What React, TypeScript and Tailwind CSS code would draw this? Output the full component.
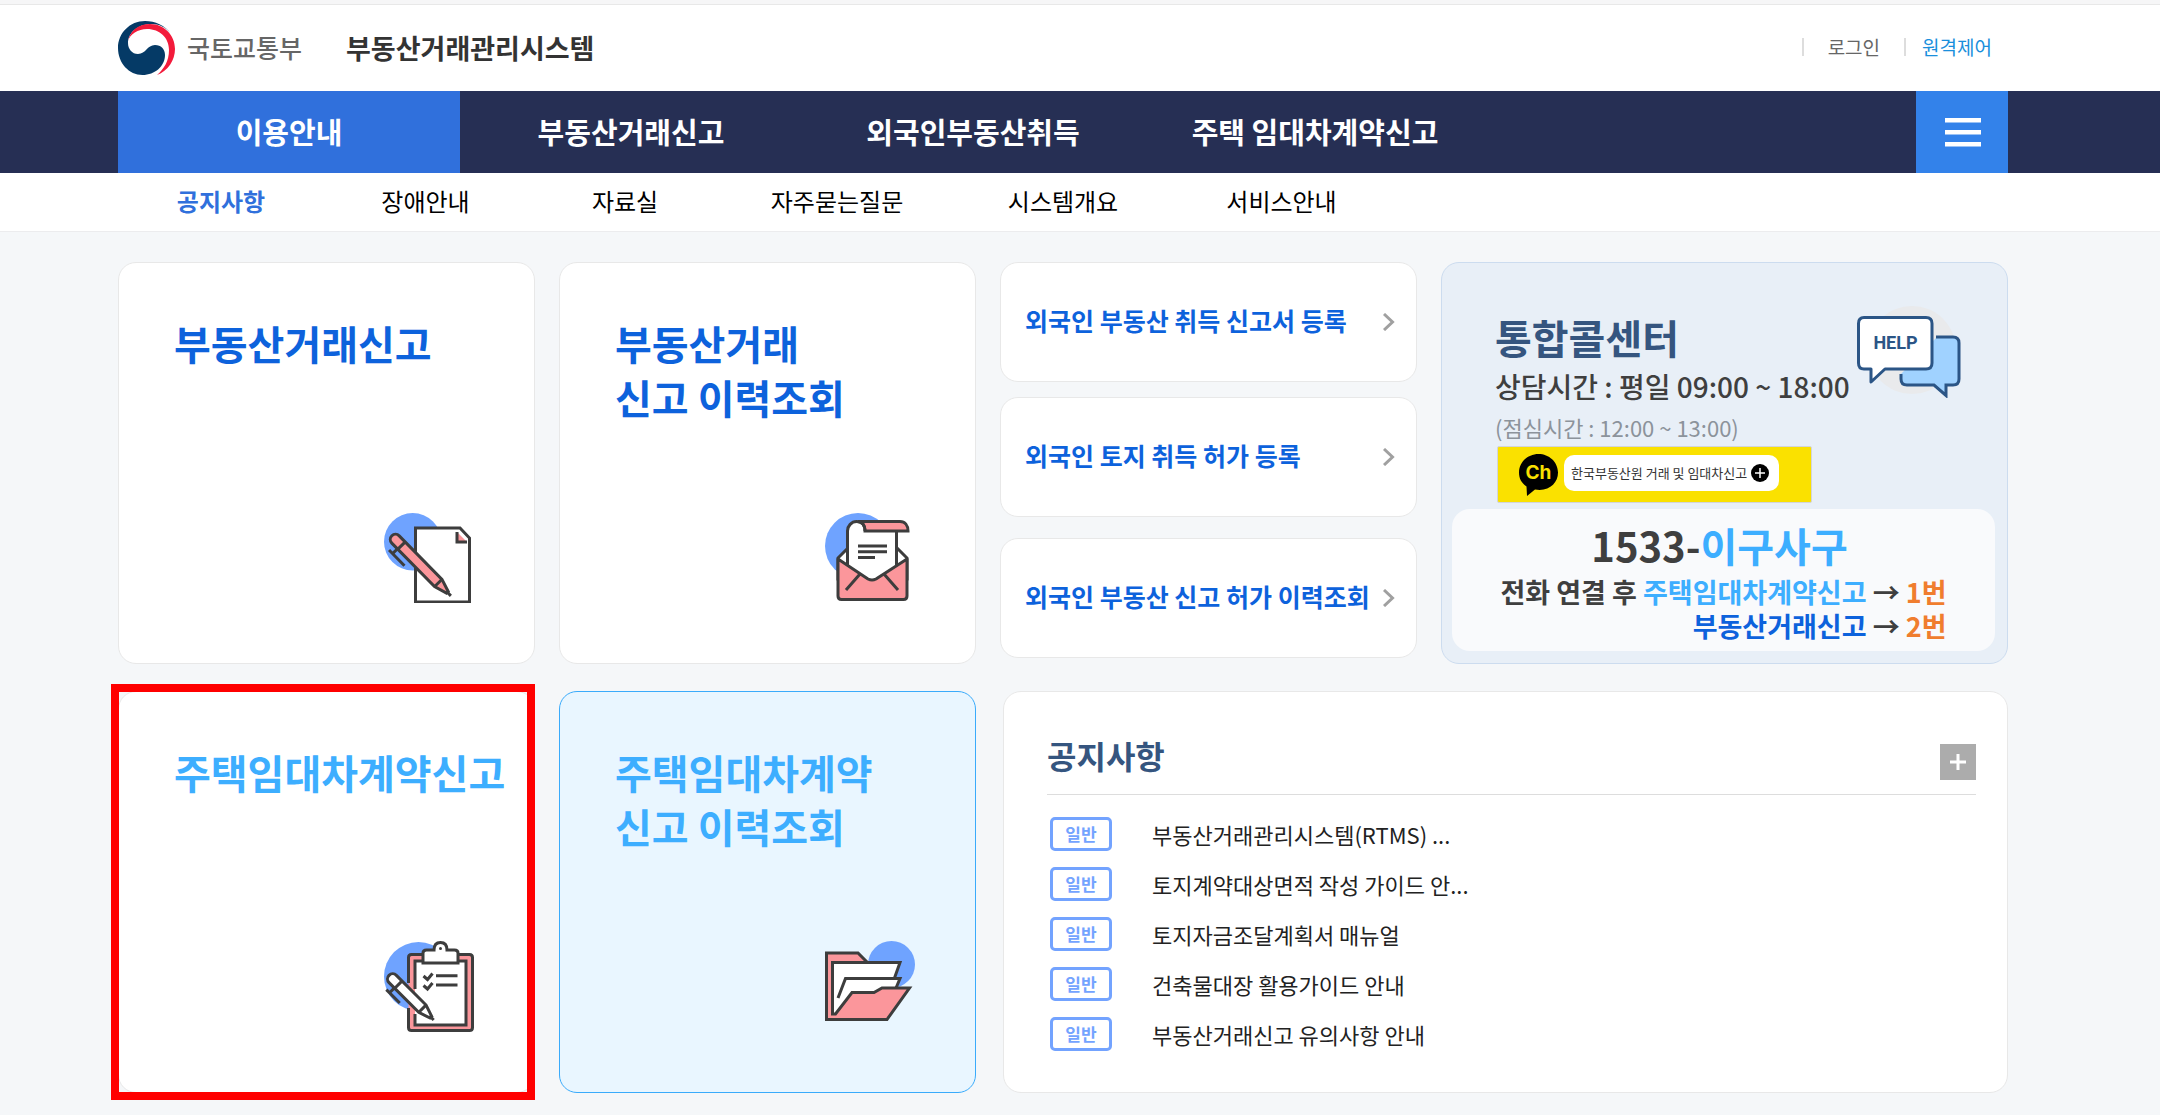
import { ReactNode } from 'react';
import clsx from 'clsx';

const MainMenu = [
    { path: '#guide', name: '이용안내', active: true },
    { path: '#trade', name: '부동산거래신고' },
    { path: '#foreigner', name: '외국인부동산취득' },
    { path: '#lease', name: '주택 임대차계약신고' },
];

const SubMenu = [
    { path: '#notice', name: '공지사항', active: true },
    { path: '#trouble', name: '장애안내' },
    { path: '#data', name: '자료실' },
    { path: '#faq', name: '자주묻는질문' },
    { path: '#system', name: '시스템개요' },
    { path: '#service', name: '서비스안내' },
];

const Notices = [
    '부동산거래관리시스템(RTMS) ...',
    '토지계약대상면적 작성 가이드 안...',
    '토지자금조달계획서 매뉴얼',
    '건축물대장 활용가이드 안내',
    '부동산거래신고 유의사항 안내',
];

const Emblem = () => (
    <svg width="57" height="54" viewBox="0 0 57 54" aria-hidden="true">
        <path
            fill="#053a66"
            d="M53 13C47 4 37 0 27 0 12 0 0 12 0 27c0 15 11 27 24.5 27C37 54 47 45 47 34c0-6-4-10-10-10-8 0-9 9-17 9-6 0-10-5-10-11C10 12 20 3 33 3c8 0 15 3 20 10Z"
        />
        <path
            fill="#f31b3b"
            d="M10 20C12 10 20 3 32 3c14 0 25 11 25 25 0 11-7 22-18 26 7-6 12-14 12-25C51 17 42 8 29 8c-9 0-17 5-19 12Z"
        />
    </svg>
);

const PenPaperIcon = () => (
    <svg width="90" height="90" viewBox="0 0 90 90" fill="none" stroke="#3d3d3d" strokeWidth="3" aria-hidden="true">
        <circle cx="28.7" cy="28.7" r="28.7" fill="#6fa3ff" stroke="none" />
        <path d="M31.5 15H76l9.5 10v64h-54Z" fill="#fff" />
        <path d="M73 19v10h10Z" fill="#fb969b" stroke="none" />
        <path d="M73 19v10h10" />
        <g transform="translate(11.5 26.5) rotate(45.5)">
            <path d="M0-5.2h61l13 4v2.4l-13 4H0A5.2 5.2 0 0 1 0-5.2Z" fill="#fb969b" />
            <path d="M8.5-5v10M61-5v10M73 0h6M8 5v7M3 12h22" />
        </g>
    </svg>
);

const EnvelopeIcon = () => (
    <svg width="90" height="90" viewBox="0 0 90 90" fill="none" stroke="#3d3d3d" strokeWidth="3" aria-hidden="true">
        <circle cx="33" cy="33" r="33" fill="#6fa3ff" stroke="none" />
        <path d="M13 45 24 34h47l11 11v21H13Z" fill="#fff" />
        <path d="M22.5 55V18c0-5 4-9.5 9-9.5h44v9.5h-4v37L47 68Z" fill="#fff" stroke="none" />
        <path d="M33 8.5h42c5 0 8 4 8 9.5H40c0-5-2-9-7-9.5Z" fill="#fb969b" />
        <path d="M22.5 53V18c0-5 4-9.5 9-9.5S40 12 40 18M71.5 18v34" />
        <path
            d="M13 46l30 20c3 1.5 5 1.5 8 0l31-20v37c0 2-1 3.5-3.5 3.5h-62C14 86.5 13 85 13 83Z"
            fill="#fb969b"
            strokeLinejoin="round"
        />
        <path d="M35 61 21 77M59 61l14 16" />
        <path d="M33 33h29M33 38.7h29M33 44.5h17" />
    </svg>
);

const ClipboardIcon = () => (
    <svg width="90" height="91" viewBox="0 0 90 91" fill="none" stroke="#3d3d3d" strokeWidth="3" aria-hidden="true">
        <circle cx="34.5" cy="35.5" r="34.5" fill="#6fa3ff" stroke="none" />
        <rect x="24.5" y="13.5" width="64" height="76" rx="3" fill="#fb969b" stroke="none" />
        <rect x="31" y="20" width="51" height="64" fill="#fff" stroke="none" />
        <path d="M24.5 42V16.5c0-2 1-3 3-3h58c2 0 3 1 3 3v70c0 2-1 3-3 3h-58c-2 0-3-1-3-3V67" />
        <path d="M31 48V20h51v64H31V73" />
        <path d="M39 22V12c0-2 1-3 3.5-3H50c0-5 2-7.5 6.5-7.5S63 4 63 9h7.5c2.5 0 3.5 1 3.5 3v10Z" fill="#fff" />
        <circle cx="56.5" cy="7.5" r="1.5" fill="#3d3d3d" stroke="none" />
        <path d="m39.5 35 4 3.5 5-6M39.5 44.5l4 3.5 5-6M52 34.7h21.5M52 44h21.5" />
        <g transform="translate(8.7 38) rotate(45)">
            <path d="M0-5.2h42l12 4v2.4l-12 4H0A5.2 5.2 0 0 1 0-5.2Z" fill="#fff" />
            <path d="M8-5v10M42-5v10M52 0h6M7.5 5v7M3 12h19" />
        </g>
    </svg>
);

const FolderIcon = () => (
    <svg width="90" height="91" viewBox="0 0 90 91" fill="none" stroke="#3d3d3d" strokeWidth="3" aria-hidden="true">
        <circle cx="66.5" cy="23.5" r="23.5" fill="#6fa3ff" stroke="none" />
        <path d="M1.5 12H33l9.5 9.5V78h-41Z" fill="#fb969b" stroke="none" />
        <path d="M42.5 21.5 33 12H1.5v66" />
        <path d="M7.5 21.5H75L69.5 37 60 60 10 73H7.5Z" fill="#fff" stroke="none" />
        <path d="M7.5 73V21.5H75L69.5 37" />
        <path d="M13 57l7.5-19.5H75L71 47 50 60l-38 12" fill="#fff" stroke="none" />
        <path d="M13 57l7.5-19.5H75L71 47" />
        <path d="M7.5 73h3L27 51.5h22l8-4.5h27.5L62 78.5H1.5V70l6 3Z" fill="#fb969b" stroke="none" />
        <path d="M1.5 60v18.5H62L84.5 47H57l-8 4.5H27L10.5 73h-3V60" />
    </svg>
);

const HelpIcon = () => (
    <svg width="104" height="92" viewBox="0 0 104 92" fill="none" stroke="#2b5586" strokeWidth="3" aria-hidden="true">
        <circle cx="55" cy="44" r="44" fill="#e9eaec" stroke="none" />
        <path
            d="M80 31h16c4 0 6 2 6 6v36c0 4-2 6-6 6h-7v10.5L77 79H50c-4 0-6-2-6-6v-5Z"
            fill="#a0d2ff"
            stroke="none"
        />
        <path d="M79 31h17c4 0 6 2 6 6v36c0 4-2 6-6 6h-7v10.5L77 79H50c-4 0-6-2-6-6v-5" />
        <path
            d="M7 11.5h62c4 0 6 2 6 6V57c0 4-2 6-6 6H28L14 76V63H7c-4 0-5.5-2-5.5-6V17.5c0-4 1.5-6 5.5-6Z"
            fill="#fff"
            strokeLinejoin="round"
        />
        <text
            x="38.5"
            y="43"
            textAnchor="middle"
            fill="#2b5586"
            stroke="none"
            className="font-['Roboto',sans-serif] text-[18px] font-bold"
        >
            HELP
        </text>
    </svg>
);

const ChatBubble = () => (
    <svg width="39" height="42" viewBox="0 0 39 42" aria-hidden="true">
        <path fill="#000" d="M19.5 0C9 0 0 8 0 18.5c0 6 2.5 10.5 7.5 14L8 42l8-6.5C30 38 39 29 39 18.5 39 8 30 0 19.5 0Z" />
        <text x="19.5" y="25" textAnchor="middle" fill="#fae100" className="font-['Inter',sans-serif] text-[19px] font-bold">
            Ch
        </text>
    </svg>
);

const Header = () => (
    <header className="bg-white">
        <div className="h-[5px] border-b border-[#e8e8e8] bg-[#f6f6f7]" />
        <div className="flex h-[86px] items-center justify-between pr-[168px] pl-[118px]">
            <a href="#home" className="flex items-center whitespace-nowrap">
                <Emblem />
                <span className="ml-3 text-[25px] font-medium text-[#666]">국토교통부</span>
                <span className="ml-11 text-[27px] font-bold text-[#333]">부동산거래관리시스템</span>
            </a>
            <div className="flex items-center pb-[2px] text-[19px] whitespace-nowrap">
                <span className="h-[18px] w-[2px] bg-[#ddd]" />
                <a href="#login" className="mx-6 text-[#666]">
                    로그인
                </a>
                <span className="h-[18px] w-[2px] bg-[#ddd]" />
                <a href="#remote" className="ml-4 text-[#1a8fdc]">
                    원격제어
                </a>
            </div>
        </div>
        <nav className="flex h-[82px] justify-between bg-[#262f54] pr-[152px] pl-[118px]">
            <ul className="flex">
                {MainMenu.map((menu) => (
                    <li key={menu.name}>
                        <a
                            href={menu.path}
                            className={clsx(
                                'flex h-full w-[342px] items-center justify-center text-[29px] font-bold whitespace-nowrap text-white',
                                menu.active && 'bg-[#3070dc]',
                            )}
                        >
                            {menu.name}
                        </a>
                    </li>
                ))}
            </ul>
            <button type="button" aria-label="전체메뉴" className="flex w-[92px] items-center justify-center bg-[#3382ea] pl-[2px]">
                <svg width="36" height="30" viewBox="0 0 36 30" fill="#fff">
                    <path d="M0 1h36v4.5H0ZM0 13h36v4.5H0ZM0 25h36v4.5H0Z" />
                </svg>
            </button>
        </nav>
        <ul className="grid h-[59px] grid-cols-[206px_203px_196px_228px_224px_213px] border-b border-[#ececee] pb-[2px] pl-[118px]">
            {SubMenu.map((menu) => (
                <li key={menu.name} className="flex items-center justify-center text-2xl whitespace-nowrap">
                    <a href={menu.path} className={clsx(menu.active ? 'font-bold text-[#3070dc]' : 'text-black')}>
                        {menu.name}
                    </a>
                </li>
            ))}
        </ul>
    </header>
);

type ServiceCardProps = {
    lines: string[];
    icon: ReactNode;
    className: string;
    selected?: boolean;
};

const ServiceCard = ({ lines, icon, className, selected }: ServiceCardProps) => (
    <a href="#service" className={clsx('relative flex h-[402px] flex-col justify-between rounded-[18px] border', className)}>
        <h2 className="pt-[53px] pl-[55px] text-[40px] leading-[54px] font-bold whitespace-nowrap">
            {lines.map((line) => (
                <span key={line} className="block">
                    {line}
                </span>
            ))}
        </h2>
        <div className="mr-[60px] mb-[60px] self-end">{icon}</div>
        {selected && <span className="absolute -inset-y-2 -right-px -left-2 border-8 border-[#ff0000]" />}
    </a>
);

const LinkCard = ({ name }: { name: string }) => (
    <a
        href="#foreigner"
        className="flex h-[120px] items-center justify-between rounded-[18px] border border-[#e8e8e8] bg-white pr-[21px] pl-6 text-[25px] font-bold whitespace-nowrap text-[#0d62dc]"
    >
        <span className="pb-[2px]">{name}</span>
        <svg width="12" height="18" viewBox="0 0 12 18" fill="none" stroke="#a0a0a0" strokeWidth="3" aria-hidden="true">
            <path d="m1 1 8.5 8L1 17" />
        </svg>
    </a>
);

const CallCenter = () => (
    <section className="flex h-[402px] flex-col rounded-[18px] border border-[#ccdcef] bg-[#e8eff7] pb-3 whitespace-nowrap">
        <div className="flex items-start justify-between pr-[46px] pl-[53px]">
            <div className="pt-[48px]">
                <h2 className="text-[40px] leading-[53px] font-bold text-[#35557f]">통합콜센터</h2>
                <p className="text-[28px] leading-[44px] font-medium text-[#3f3f3f]">상담시간 : 평일 09:00 ~ 18:00</p>
                <p className="text-[22px] leading-[38px] text-[#8c939b]">(점심시간 : 12:00 ~ 13:00)</p>
            </div>
            <div className="mt-[43px] shrink-0">
                <HelpIcon />
            </div>
        </div>
        <a
            href="#kakao"
            className="ml-[55px] flex h-[57px] w-[315px] items-center rounded-[2px] border border-[#d3d5da] bg-[#fae100] pl-[21px]"
        >
            <ChatBubble />
            <span className="mb-1 ml-[6px] flex h-9 w-[215px] items-center justify-between rounded-[10px] bg-white pr-[10px] pl-[7px] text-[13px] text-[#333]">
                한국부동산원 거래 및 임대차신고
                <svg width="18" height="18" viewBox="0 0 18 18" stroke="#fff" strokeWidth="1.5" aria-hidden="true">
                    <circle cx="9" cy="9" r="9" fill="#000" stroke="none" />
                    <path d="M9 4v10M4 9h10" />
                </svg>
            </span>
        </a>
        <div className="mt-[6px] mr-3 ml-[10px] flex grow flex-col items-center rounded-[18px] bg-[#f9fafc] pt-[6px] font-bold text-[#3f3f3f]">
            <p className="pr-2 text-[40px] leading-[60px]">
                1533-<span className="text-[#3daeff]">이구사구</span>
            </p>
            <div className="text-right text-[27px] leading-[34px]">
                <p>
                    전화 연결 후 <span className="text-[#3daeff]">주택임대차계약신고</span> →{' '}
                    <span className="text-[#f07d2e]">1번</span>
                </p>
                <p>
                    <span className="text-[#0d62dc]">부동산거래신고</span> → <span className="text-[#f07d2e]">2번</span>
                </p>
            </div>
        </div>
    </section>
);

const NoticeBoard = () => (
    <section className="h-[402px] rounded-[18px] border border-[#e8e8e8] bg-white pr-[31px] pl-[43px]">
        <div className="flex h-[103px] items-end justify-between border-b border-[#ddd] pb-[14px]">
            <h2 className="text-[32px] leading-[50px] font-bold text-[#35557f]">공지사항</h2>
            <button type="button" aria-label="더보기" className="flex size-9 items-center justify-center bg-[#acacac]">
                <svg width="16" height="16" viewBox="0 0 16 16" stroke="#fff" strokeWidth="3">
                    <path d="M8 0v16M0 8h16" />
                </svg>
            </button>
        </div>
        <ul className="mt-[22px] flex flex-col gap-4 pl-[3px]">
            {Notices.map((notice) => (
                <li key={notice} className="flex items-center">
                    <span className="flex h-[34px] w-[62px] items-center justify-center rounded-[5px] border-3 border-[#73a3ff] text-[17px] font-bold text-[#73a3ff]">
                        일반
                    </span>
                    <a href="#notice" className="ml-10 text-[22px] leading-[34px] whitespace-nowrap text-[#222]">
                        {notice}
                    </a>
                </li>
            ))}
        </ul>
    </section>
);

const App = () => {
    return (
        <div className="min-h-screen bg-[#f5f7f9] font-['Noto_Sans_CJK_KR','Noto_Sans',sans-serif]">
            <Header />
            <main className="flex flex-col gap-[27px] pt-[30px] pr-[152px] pb-[22px] pl-[118px]">
                <div className="grid grid-cols-[417fr_417fr_417fr_567fr] gap-6">
                    <ServiceCard
                        lines={['부동산거래신고']}
                        icon={<PenPaperIcon />}
                        className="border-[#e8e8e8] bg-white text-[#0d62dc]"
                    />
                    <ServiceCard
                        lines={['부동산거래', '신고 이력조회']}
                        icon={<EnvelopeIcon />}
                        className="border-[#e8e8e8] bg-white text-[#0d62dc]"
                    />
                    <div className="flex flex-col gap-[21px]">
                        <div className="flex flex-col gap-[15px]">
                            <LinkCard name="외국인 부동산 취득 신고서 등록" />
                            <LinkCard name="외국인 토지 취득 허가 등록" />
                        </div>
                        <LinkCard name="외국인 부동산 신고 허가 이력조회" />
                    </div>
                    <CallCenter />
                </div>
                <div className="grid grid-cols-[858fr_1005fr] gap-[27px]">
                    <div className="grid grid-cols-2 gap-6">
                        <ServiceCard
                            lines={['주택임대차계약신고']}
                            icon={<ClipboardIcon />}
                            className="border-[#e8e8e8] bg-white text-[#3daeff]"
                            selected
                        />
                        <ServiceCard
                            lines={['주택임대차계약', '신고 이력조회']}
                            icon={<FolderIcon />}
                            className="border-[#3aabfb] bg-[#e9f6ff] text-[#3daeff]"
                        />
                    </div>
                    <NoticeBoard />
                </div>
            </main>
        </div>
    );
};

export default App;
